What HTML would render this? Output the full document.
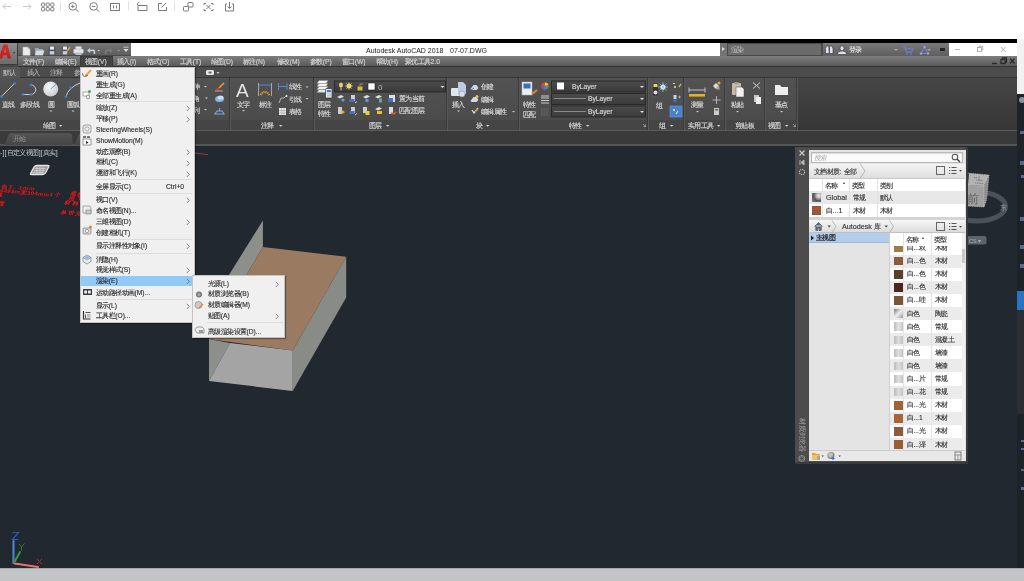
<!DOCTYPE html>
<html><head><meta charset="utf-8">
<style>
*{margin:0;padding:0;box-sizing:border-box}
html,body{width:1024px;height:581px;overflow:hidden;background:#fff;font-family:"Liberation Sans",sans-serif;}
.t,.mi,svg{will-change:transform}
.a{position:absolute}
.t{position:absolute;white-space:nowrap;font-size:6.7px;line-height:8px}
.w{color:#d8d8d8;-webkit-text-stroke:0.15px #d8d8d8}
.mi{position:absolute;white-space:nowrap;font-size:6.7px;line-height:8px;color:#222;-webkit-text-stroke:0.1px #222}
.sep{position:absolute;height:1px;background:#dcdcdc}
.dn{position:absolute;width:0;height:0;border-left:2px solid transparent;border-right:2px solid transparent;border-top:2px solid #ddd}
.c{letter-spacing:-0.6px}
.vsep{position:absolute;top:78px;width:1px;height:52px;background:#3a3a3a;box-shadow:1px 0 0 #585858}
</style></head><body>
<!-- ===== browser toolbar ===== -->
<svg class="a" style="left:0;top:0" width="240" height="14" fill="none" stroke-width="1">
<g stroke="#c8c8c8"><path d="M3 6.5h8M6 3.5l-3 3 3 3"/><path d="M23 6.5h8M28 3.5l3 3-3 3"/></g>
<g stroke="#7a7a7a">
<rect x="41.5" y="3.0" width="3.2" height="3.2" rx="0.7"/><rect x="46.1" y="3.0" width="3.2" height="3.2" rx="0.7"/><rect x="50.7" y="3.0" width="3.2" height="3.2" rx="0.7"/><rect x="41.5" y="7.6" width="3.2" height="3.2" rx="0.7"/><rect x="46.1" y="7.6" width="3.2" height="3.2" rx="0.7"/><rect x="50.7" y="7.6" width="3.2" height="3.2" rx="0.7"/>
<circle cx="72.8" cy="6.4" r="3.8"/><path d="M75.6 9.2l3 2.6M71 6.4h3.6M72.8 4.6v3.6"/>
<circle cx="93.6" cy="6.4" r="3.8"/><path d="M96.4 9.2l3 2.6M91.8 6.4h3.6"/>
<rect x="110.5" y="3.5" width="9" height="7"/><path d="M113.5 5.5v3M116.5 5.5v3"/>
<path d="M138 5.5h9v5h-9zM137.5 5v-1.5l1.8-1.5"/>
<path d="M162 3.5h-3.5v7h8v-3.5M161.5 7.5l4.5-4.5"/>
<rect x="183.5" y="6.5" width="5" height="4.5" rx="0.8"/><rect x="188" y="2.5" width="5" height="4.5" rx="0.8"/>
<path d="M204 5v-1.5h2M211 3.5h2V5M213 9v1.5h-2M206 10.5h-2V9M206.5 5l4 4M210.5 5l-4 4"/>
<path d="M227 4h-1.5v7h8V4H232M229.5 2v6M227.5 6.5l2 2 2-2"/>
</g>
<g stroke="#e0e0e0"><path d="M60.5 1.5v9M128.5 1.5v9M174.5 1.5v9"/></g>
</svg>

<!-- ===== black bar & app frame ===== -->
<div class="a" style="left:0;top:39px;width:1017px;height:4px;background:#000"></div>
<div class="a" style="left:1017px;top:39px;width:7px;height:55px;background:#f2f2f2"></div>
<div class="a" style="left:1017px;top:94px;width:7px;height:474px;background:#1e232a"></div>

<!-- title bar -->
<div class="a" style="left:0;top:43px;width:1017px;height:13px;background:#fff"></div>
<div class="a" style="left:18px;top:43px;width:113px;height:13px;background:linear-gradient(#747474,#5e5e5e);border-bottom:1px solid #4a4a4a"></div>
<div class="t" style="left:366px;top:45.5px;font-size:7px;line-height:9px;color:#1a1a1a">Autodesk AutoCAD 2018</div><div class="t" style="left:449.5px;top:45.5px;font-size:7px;line-height:9px;color:#1a1a1a">07-07.DWG</div>
<div class="a" style="left:720px;top:43px;width:7px;height:13px;background:#747474"></div>
<div class="a" style="left:722px;top:47px;width:0;height:0;border-top:2.5px solid transparent;border-bottom:2.5px solid transparent;border-left:3px solid #ddd"></div>
<div class="a" style="left:727px;top:43px;width:95px;height:13px;background:#6b6b6b;border:1px solid #4a4a4a"></div>
<div class="t" style="left:731px;top:46px;color:#c8c8c8"><span class="c">渲染</span></div>
<div class="a" style="left:822px;top:43px;width:127px;height:13px;background:linear-gradient(#7a7a7a,#5e5e5e);border-left:1px solid #4a4a4a"></div>
<div class="t" style="left:849px;top:46px;color:#e0e0e0;-webkit-text-stroke:0.15px #e0e0e0"><span class="c">登录</span></div>
<div class="dn" style="left:894px;top:49px;border-top-color:#aaa"></div>
<div class="dn" style="left:927px;top:49px;border-top-color:#aaa"></div>
<div class="a" style="left:940px;top:48px;width:5px;height:3px;background:#222"></div>
<div class="a" style="left:949px;top:43px;width:68px;height:13px;background:#fff"></div>
<svg class="a" style="left:820px;top:43px" width="200" height="14" fill="none" stroke-width="1">
<g fill="#dfe4ec" stroke="#333" stroke-width="0.6"><path d="M5.5 10.5v-5l1-2.5h2l0.5 2.5v5z"/><path d="M9.5 10.5v-5l0.5-2.5h2l1 2.5v5z"/></g><path d="M8.8 6h1" stroke="#333" stroke-width="1"/>
<g fill="#dde2ea" stroke="#333" stroke-width="0.6"><ellipse cx="22" cy="5.3" rx="2" ry="2.6"/><path d="M17.5 11.5c0-2.6 1.6-3.4 4.5-3.4s4.5 0.8 4.5 3.4z"/></g>
<path d="M83 4h1.8l1.5 5h5.4l1-3.5h-7" stroke="#6a7ac0" stroke-width="1.3"/><circle cx="87" cy="11" r="0.9" fill="#6a7ac0"/><circle cx="91" cy="11" r="0.9" fill="#6a7ac0"/>
<path d="M101 10.5l3.5-6.5 3.5 6.5z" stroke="#7a86c8" stroke-width="1"/><g fill="#a8b4e8" stroke="#6a76b8" stroke-width="0.5"><circle cx="104.5" cy="4" r="1.2"/><circle cx="101" cy="10.5" r="1.2"/><circle cx="108" cy="10.5" r="1.2"/></g>
<g stroke="#a0a0a0" stroke-width="0.8"><path d="M135 6.5h5"/><rect x="157.5" y="4.5" width="4" height="4"/><path d="M159 4.5v-1.3h3.8v3.8h-1.3"/><path d="M181 4l4.5 5M185.5 4l-4.5 5"/></g>
</svg>

<!-- logo -->
<div class="a" style="left:0;top:43px;width:18px;height:22px;background:linear-gradient(#8e8e8e,#6c6c6c);border-right:1px solid #3c3c3c;border-bottom:1px solid #3c3c3c"></div>
<div class="a" style="left:0;top:65px;width:18px;height:2px;background:#474747"></div>
<svg class="a" style="left:0;top:43px" width="18" height="22"><defs><linearGradient id="lg" x1="0" y1="0" x2="0" y2="1"><stop offset="0" stop-color="#e02a2a"/><stop offset="1" stop-color="#c01c1c"/></linearGradient></defs>
<path fill-rule="evenodd" d="M-1.5 15.5 L3.6 1.5 H7.4 L11 15.5 H7.6 L6.9 12.3 H3.2 L2.2 15.5 Z M3.9 9.6 H6.3 L5.3 5 Z" fill="url(#lg)"/><path d="M12.8 9.2h2.6l-1.3 1.5z" fill="#333"/></svg>
<!-- QAT icons -->
<svg class="a" style="left:17px;top:43px" width="114" height="13">
<path d="M5.8 4h4.8l2.6 2.4v6.1H5.8z" fill="#ececec" stroke="#9a9a9a" stroke-width="0.4"/><path d="M10.6 4v2.4h2.6" fill="#c8c8c8"/>
<path d="M18 5h3.2l1 1h3.8v6.2H18z" fill="#9aa8b8"/><path d="M19.5 7.6h8l-1.6 4.6H18z" fill="#d4dce6"/>
<rect x="31.5" y="3.6" width="7" height="8.4" rx="1" fill="#4c5a6a"/><rect x="33" y="3.6" width="4" height="3" fill="#eaeaea"/><rect x="32.8" y="8.2" width="4.4" height="3.2" fill="#c8d0d8"/>
<rect x="44.5" y="3.6" width="7" height="8.4" rx="1" fill="#4c5a6a"/><rect x="46" y="3.6" width="4" height="3" fill="#eaeaea"/><rect x="45.8" y="8.2" width="4.4" height="3.2" fill="#c8d0d8"/><path d="M49.5 7.5l3-3.8 1.2 1-3 3.8z" fill="#f0a030"/>
<rect x="58.5" y="3.5" width="6" height="2.5" fill="#e8e8e8"/><rect x="56.5" y="6" width="10" height="4.5" rx="1.2" fill="#e4e4e4" stroke="#999" stroke-width="0.4"/><rect x="58.5" y="9.5" width="6" height="2.5" fill="#a8c4e4"/>
<path d="M70 7.5l3-2.6v1.6h3.6q1.6 0 1.6 1.8v2.6h-1.6V8.2H73v1.8z" fill="#c4ccd6"/>
<path d="M80.5 7h2.4l-1.2 1.4z" fill="#ccc"/>
<path d="M96 7.5l-3-2.6v1.6h-3.6q-1.6 0-1.6 1.8v2.6h1.6V8.2H93v1.8z" fill="#7a7a7a"/>
<path d="M100.5 7h2.4l-1.2 1.4z" fill="#aaa"/>
<path d="M106.5 4.2h5" stroke="#ddd" stroke-width="0.8"/><path d="M106.5 6l2.5 3 2.5-3z" fill="#ddd"/>
</svg>

<!-- menu bar -->
<div class="a" style="left:18px;top:56px;width:999px;height:11px;background:linear-gradient(#7e7e7e,#5a5a5a);border-bottom:1px solid #333"></div>
<div class="a" style="left:80px;top:56px;width:33px;height:11px;background:#444;border:1px solid #3a3a3a"></div>
<div class="t w" style="left:23px;top:57.5px;color:#cfcfcf"><span class="c">文件</span>(F)</div>
<div class="t w" style="left:55px;top:57.5px;color:#cfcfcf"><span class="c">编辑</span>(E)</div>
<div class="t w" style="left:85px;top:57.5px;color:#cfcfcf"><span class="c">视图</span>(V)</div>
<div class="t w" style="left:117px;top:57.5px;color:#cfcfcf"><span class="c">插入</span>(I)</div>
<div class="t w" style="left:147px;top:57.5px;color:#cfcfcf"><span class="c">格式</span>(O)</div>
<div class="t w" style="left:180px;top:57.5px;color:#cfcfcf"><span class="c">工具</span>(T)</div>
<div class="t w" style="left:211px;top:57.5px;color:#cfcfcf"><span class="c">绘图</span>(D)</div>
<div class="t w" style="left:243px;top:57.5px;color:#cfcfcf"><span class="c">标注</span>(N)</div>
<div class="t w" style="left:277px;top:57.5px;color:#cfcfcf"><span class="c">修改</span>(M)</div>
<div class="t w" style="left:310px;top:57.5px;color:#cfcfcf"><span class="c">参数</span>(P)</div>
<div class="t w" style="left:342px;top:57.5px;color:#cfcfcf"><span class="c">窗口</span>(W)</div>
<div class="t w" style="left:376px;top:57.5px;color:#cfcfcf"><span class="c">帮助</span>(H)</div>
<div class="t w" style="left:405px;top:57.5px;color:#cfcfcf"><span class="c">聚优工具</span>2.0</div>
<svg class="a" style="left:985px;top:56px" width="32" height="11" fill="none" stroke="#2a2a2a" stroke-width="1.3">
<path d="M7 7.5h5"/><rect x="16" y="3.5" width="4" height="4"/><path d="M17.5 3.5v-1.5h4v4h-1.5"/><path d="M25 2.5l4.5 5M29.5 2.5l-4.5 5"/>
</svg>

<!-- ribbon tabs -->
<div class="a" style="left:0;top:67px;width:1017px;height:11px;background:#4c4c4c;border-bottom:1px solid #363636"></div>
<div class="a" style="left:0;top:67px;width:20px;height:11px;background:#565656"></div>
<div class="t" style="left:3px;top:68.5px;color:#d0d0d0"><span class="c">默认</span></div>
<div class="t" style="left:27px;top:68.5px;color:#c0c0c0"><span class="c">插入</span></div>
<div class="t" style="left:50px;top:68.5px;color:#c0c0c0"><span class="c">注释</span></div>
<div class="t" style="left:74px;top:68.5px;color:#c0c0c0"><span class="c">参</span></div>
<svg class="a" style="left:205px;top:68px" width="16" height="9"><rect x="1" y="2" width="8" height="5" rx="1.5" fill="#e8e8e8"/><rect x="3.5" y="3.5" width="3" height="2" fill="#666"/><path d="M11.5 4h3l-1.5 2z" fill="#ccc"/></svg>

<!-- ribbon body -->
<div class="a" style="left:0;top:78px;width:797px;height:52px;background:linear-gradient(#525252,#4a4a4a)"></div>
<div class="a" style="left:0;top:119.5px;width:797px;height:10.5px;background:#454545"></div>
<div class="a" style="left:797px;top:78px;width:220px;height:52px;background:linear-gradient(#464646,#363636)"></div>
<div class="a" style="left:0;top:130px;width:1017px;height:1px;background:#5c5c5c"></div>

<!-- file tabs -->
<div class="a" style="left:0;top:131px;width:1017px;height:13px;background:#3a3a3a"></div>
<div class="a" style="left:0;top:144px;width:1017px;height:2px;background:#555"></div>
<svg class="a" style="left:0;top:131px" width="100" height="14"><defs><linearGradient id="tg" x1="0" y1="0" x2="0" y2="1"><stop offset="0" stop-color="#545454"/><stop offset="1" stop-color="#464646"/></linearGradient></defs><path d="M3 14C7 14 6.5 2 11 2H69Q72.5 2 72.5 5.5V14Z" fill="url(#tg)"/><path d="M73 14C77 14 76.5 2 81 2H100V14Z" fill="url(#tg)"/></svg>
<div class="t" style="left:13px;top:135px;color:#9a9a9a"><span class="c">开始</span></div>


<!-- drawing area -->
<div class="a" style="left:0;top:146px;width:1017px;height:422px;background:#212830"></div>
<div class="a" style="left:0;top:568px;width:1024px;height:13px;background:#c3c4c6;box-shadow:inset 0 1px 0 #a8a9ab"></div>

<!-- panel separators -->
<div class="vsep" style="left:229px"></div>
<div class="vsep" style="left:313px"></div>
<div class="vsep" style="left:446px"></div>
<div class="vsep" style="left:518px"></div>
<div class="vsep" style="left:647px"></div>
<div class="vsep" style="left:683px"></div>
<div class="vsep" style="left:724px"></div>
<div class="vsep" style="left:764px"></div>
<div class="vsep" style="left:796px"></div>
<svg class="a" style="left:0;top:78px" width="800" height="52">
<!-- draw panel -->
<path d="M1.5 18.6L14.5 5.3M23 16.5H31M31 7a4.75 4.75 0 0 1 0 9.5M66 18.6Q68 10 80 5" stroke="#cfcfcf" stroke-width="1" fill="none"/>
<g fill="#4a78c8"><circle cx="1.5" cy="18.6" r="1.4"/><circle cx="14.5" cy="5.3" r="1.4"/><circle cx="23" cy="16.5" r="1.4"/><circle cx="31" cy="16.5" r="1.4"/><circle cx="31" cy="7" r="1.4"/><circle cx="66" cy="18.6" r="1.4"/><circle cx="70.5" cy="9.6" r="1.4"/></g>
<defs><radialGradient id="cg" cx="0.4" cy="0.35" r="0.7"><stop offset="0" stop-color="#fafafa"/><stop offset="1" stop-color="#c8c8d0"/></radialGradient></defs>
<circle cx="50.7" cy="11" r="7.5" fill="url(#cg)"/><path d="M50.7 11L56 6.5" stroke="#5aa0e8" stroke-width="1"/>
<!-- hidden modify panel icons -->
<path d="M224 5l-5 5" stroke="#e8a040" stroke-width="1.6"/><circle cx="218" cy="11" r="1.8" fill="#c84020"/><path d="M215 13h8" stroke="#aaa"/>
<ellipse cx="219.5" cy="21" rx="4.5" ry="3" fill="#8ab4e8"/><ellipse cx="220.5" cy="19.5" rx="3" ry="2" fill="#c8dcf4"/>
<path d="M215 36h9l-2-3h-5z" fill="none" stroke="#7aa6e0" stroke-width="1.2"/><path d="M219.5 30v3" stroke="#7aa6e0" stroke-width="1.2"/>
<g fill="#ccc"><path d="M204 8h3l-1.5 1.6z"/><path d="M205 19.5h3l-1.5 1.6z"/><path d="M204 31h3l-1.5 1.6z"/></g>
<!-- annotation -->
<text x="236" y="19" font-size="19" fill="#e6e6e6" font-family="Liberation Sans">A</text>
<path d="M258.5 5v13M271.5 5v13" stroke="#bbb" stroke-width="0.8"/><path d="M259 7h12" stroke="#4a8ae0" stroke-width="1"/>
<path d="M260.5 17q4-6 9 0" stroke="#e8a020" stroke-width="2" fill="none" stroke-dasharray="1.2 0.8"/>
<path d="M278.5 5v7M287 5v7M279 8.5h8" stroke="#4a8ae0" stroke-width="1" fill="none"/>
<path d="M279 25l2-5h3l2-2" stroke="#ccc" stroke-width="0.8" fill="none"/><circle cx="286.5" cy="18" r="1" fill="#eee"/>
<rect x="279" y="30" width="7" height="7" fill="#e8e8e8"/><path d="M279 32.5h7M279 35h7M281.5 30v7M284 30v7" stroke="#999" stroke-width="0.5"/>
<g fill="#ccc"><path d="M305.5 8.5h3l-1.5 1.6z"/><path d="M305.5 20h3l-1.5 1.6z"/><path d="M242 32h3l-1.5 1.6z"/></g>
<g fill="#ccc"><path d="M49.5 32.5h3l-1.5 1.6z"/><path d="M71.5 32.5h3l-1.5 1.6z"/></g>
<!-- layer panel -->
<g stroke="#888" stroke-width="0.5"><path d="M317 11.5l2-3h9l-2 3z" fill="#f2f2f2"/><path d="M317 8.5l2-3h9l-2 3z" fill="#f6f6f6"/><path d="M317 5.5l2-3h9l-2 3z" fill="#fafafa"/><path d="M317 14.5l2-3h9l-2 3z" fill="#e8e8e8"/></g>
<rect x="325.5" y="10.5" width="6.5" height="9.5" rx="0.8" fill="#e6ecf2" stroke="#333" stroke-width="0.7"/><rect x="326.8" y="12" width="4" height="2.2" fill="#3a78d0"/><path d="M327 16h4M327 17.8h4" stroke="#888" stroke-width="0.5"/>
<rect x="334.5" y="3" width="111" height="11" fill="url(#dd)" stroke="#2a2a2a"/>
<ellipse cx="341" cy="7" rx="2" ry="2.5" fill="#f0d060"/><path d="M341 9.5v3" stroke="#ccc"/>
<circle cx="349" cy="8" r="2.5" fill="#f0e080"/><path d="M345 8h8M349 4v8M346.2 5.2l5.6 5.6M351.8 5.2l-5.6 5.6" stroke="#e8d060" stroke-width="0.6"/>
<rect x="357.5" y="8.5" width="5" height="4" fill="#e0b830"/><path d="M360 8.5v-2.5h3" stroke="#aaa" fill="none" stroke-width="0.7"/>
<rect x="368" y="5" width="7" height="7" fill="#fff" stroke="#222" stroke-width="0.6"/>
<text x="378" y="12" font-size="8" fill="#bbb" font-family="Liberation Sans">0</text>
<path d="M440.5 8h4l-2 2z" fill="#ddd"/>
<g>
<path d="M337 19l4-2 3 1.5-4 2z" fill="#ddd"/><circle cx="343" cy="22" r="1.6" fill="#5aa0e8"/>
<rect x="351" y="17" width="4" height="6" fill="#ccd"/><rect x="349.5" y="21" width="5" height="3" fill="#4a70c0"/><path d="M355 25l2-1.5" stroke="#ccc"/>
<path d="M363 19l4-2 3 1.5-4 2z" fill="#ddd"/><circle cx="367" cy="22.5" r="1.8" fill="#5a9ae0"/>
<path d="M375 19l4-2 3 1.5-4 2z" fill="#ddd"/><rect x="379" y="20.5" width="3" height="4" fill="#6aa" />
<rect x="389" y="17" width="6" height="7" fill="#dde" /><rect x="388" y="20" width="5" height="4" fill="#4a70c0"/>
<rect x="338" y="29" width="4" height="7" fill="#ccc"/><circle cx="343" cy="34" r="1.6" fill="#f0a030"/>
<rect x="351" y="29" width="4" height="6" fill="#ccd"/><rect x="349.5" y="33" width="5" height="3" fill="#4a70c0"/><path d="M355 37l2-1.5" stroke="#ccc"/>
<rect x="363" y="29" width="4" height="6" fill="#ccc"/><rect x="365.5" y="33" width="4" height="4" fill="#f0d020"/>
<path d="M375 31l4-2 3 1.5-4 2z" fill="#ddd"/><rect x="377" y="33" width="5" height="3" fill="#e8c020"/>
<rect x="389" y="29" width="4" height="7" fill="#ddd"/><path d="M391 35l3 1 2-2" stroke="#e86020" stroke-width="1.4" fill="none"/>
</g>
<!-- block -->
<rect x="451" y="10" width="11" height="8" rx="1" fill="#dfe6ee"/><path d="M458 4h5l3 3v9h-8z" fill="#b8cce8"/><circle cx="462" cy="16" r="3" fill="#d8dde4" stroke="#888" stroke-width="0.5"/>
<path d="M470.5 11l3-4h3l2 3-2 2h-5z" fill="#d0d8e4"/><path d="M471 12l3-2" stroke="#4a78c8"/>
<path d="M470.5 23l3-4h3l2 3-2 2h-5z" fill="#d0d8e4"/><circle cx="477" cy="18.5" r="1.5" fill="#f0c040"/>
<path d="M472 32l2 3 4-5" stroke="#ddd" stroke-width="1.3" fill="none"/><path d="M475 34l3-3" stroke="#e88030" stroke-width="1.3"/>
<g fill="#ccc"><path d="M457 32.5h3l-1.5 1.6z"/><path d="M512 33h3l-1.5 1.6z"/></g>
<!-- properties -->
<rect x="522" y="4" width="10" height="13" fill="#e8eef4" stroke="#bbb" stroke-width="0.5"/><rect x="523.5" y="5.5" width="7" height="5" fill="#3a70b0"/><path d="M532 16l5-4" stroke="#d88830" stroke-width="2.2"/>
<circle cx="545" cy="8" r="3.6" fill="#e04848"/><path d="M545 8V4.4a3.6 3.6 0 0 1 3.4 2.4z" fill="#f0d040"/><path d="M545 8l3.4-1.2a3.6 3.6 0 0 1-1 3.8z" fill="#40b040"/><path d="M545 8l2.4 2.6a3.6 3.6 0 0 1-4.4 0.4z" fill="#4080e0"/><path d="M545 8L543 11a3.6 3.6 0 0 1-1.6-3.6z" fill="#a040c0"/>
<path d="M541 18h8M541 20h8M541 22.5h8M541 25h8" stroke="#ddd" stroke-width="0.9"/>
<path d="M541 31h8M541 33h8M541 35h8M541 37h8" stroke="#888" stroke-width="0.6" stroke-dasharray="1 0.6"/>
<defs><linearGradient id="dd" x1="0" y1="0" x2="0" y2="1"><stop offset="0" stop-color="#4c4c4c"/><stop offset="1" stop-color="#3a3a3a"/></linearGradient></defs><rect x="551.5" y="3" width="94" height="11" fill="url(#dd)" stroke="#2a2a2a"/>
<rect x="551.5" y="15.5" width="94" height="11" fill="url(#dd)" stroke="#2a2a2a"/>
<rect x="551.5" y="28" width="94" height="11" fill="url(#dd)" stroke="#2a2a2a"/>
<rect x="557" y="4.5" width="7" height="7" fill="#fff"/>
<path d="M554 20.5h32M554 33.5h32" stroke="#bbb" stroke-width="0.6"/>
<g fill="#ddd"><path d="M640 8h4l-2 2z"/><path d="M640 20h4l-2 2z"/><path d="M640 33h4l-2 2z"/></g>
<!-- group -->
<rect x="652.5" y="5" width="6" height="13" fill="#333" stroke="#666" stroke-width="0.5"/><rect x="653.5" y="6" width="4" height="3" fill="#e8d860"/><circle cx="655.5" cy="14.5" r="2" fill="#ddd"/>
<circle cx="663" cy="9" r="2.6" fill="#fff"/><path d="M658 9h10M663 4v10M659.5 5.5l7 7M666.5 5.5l-7 7" stroke="#8ac8f0" stroke-width="0.7"/>
<path d="M673 5.5h2M679 9l2-3" stroke="#e8d060" stroke-width="1.2"/><circle cx="675" cy="9" r="1" fill="#ddd"/>
<rect x="673.5" y="17" width="3" height="4" fill="#ccd"/><rect x="673.5" y="21.5" width="3" height="3" fill="#3a70c0"/><path d="M678 19h3M679.5 17.5v3" stroke="#ccc" stroke-width="0.6"/>
<rect x="670" y="28" width="12" height="11" fill="#4a80d0" stroke="#6a9ae8" stroke-width="0.6"/><circle cx="674" cy="32" r="1" fill="#eee"/><path d="M676 36l2-3" stroke="#f0e060" stroke-width="1.2"/>
<!-- utilities -->
<path d="M689 12h16M689 9.5v5M705 9.5v5" stroke="#ddd" stroke-width="0.8"/><rect x="689" y="16" width="16" height="2.6" fill="#e8b020"/>
<g fill="#ccc"><path d="M696 33h3l-1.5 1.6z"/></g>
<path d="M713 8l3-3 3 3-3 3z" fill="#ddd"/><circle cx="719" cy="5" r="1.5" fill="#f0a030"/><rect x="716.5" y="8.5" width="3" height="3" fill="#aaa"/>
<path d="M712.5 22h8M716.5 18v8" stroke="#ccc" stroke-width="0.8"/>
<rect x="714" y="30" width="5" height="7" fill="#ccc"/><rect x="714.8" y="31" width="3.4" height="1.5" fill="#666"/>
<!-- clipboard -->
<rect x="732" y="5" width="9" height="12" rx="1" fill="#c6bba8"/><rect x="734.5" y="4" width="4" height="2" fill="#999"/><path d="M736 9h6l2 2v8h-8z" fill="#f0f0f0" stroke="#444" stroke-width="0.5"/>
<path d="M753 4.5l7 6M760 4.5l-7 6" stroke="#ddd" stroke-width="0.9"/>
<rect x="754" y="17" width="5" height="7" fill="#c8c8c8"/><rect x="756" y="19" width="5" height="7" fill="#eee"/>
<g fill="#ccc"><path d="M736 33h3l-1.5 1.6z"/><path d="M780 33h3l-1.5 1.6z"/></g>
<!-- view/base point -->
<path d="M775 7h5l1.5 2h6.5v8h-13z" fill="#eee"/>
<!-- panel title arrows -->
<g fill="#ddd"><path d="M59 47h3.4l-1.7 1.8z"/><path d="M279 47h3.4l-1.7 1.8z"/><path d="M386 47h3.4l-1.7 1.8z"/><path d="M486 47h3.4l-1.7 1.8z"/><path d="M586 47h3.4l-1.7 1.8z"/><path d="M670 47h3.4l-1.7 1.8z"/><path d="M717 47h3.4l-1.7 1.8z"/><path d="M785 47h3.4l-1.7 1.8z"/></g>
<path d="M643 46l2.5 2.5M645.5 46.5v2h-2" stroke="#bbb" stroke-width="0.6" fill="none"/>
<path d="M793 46l2.5 2.5M795.5 46.5v2h-2" stroke="#bbb" stroke-width="0.6" fill="none"/>
</svg>
<div class="t w" style="left:193px;top:83px"><span class="c">伸</span></div>
<div class="t w" style="left:193px;top:95px"><span class="c">角</span></div>
<div class="t w" style="left:193px;top:107px"><span class="c">列</span></div>
<div class="t w" style="left:2px;top:100.5px"><span class="c">直线</span></div>
<div class="t w" style="left:20px;top:100.5px"><span class="c">多段线</span></div>
<div class="t w" style="left:47.5px;top:100.5px"><span class="c">圆</span></div>
<div class="t w" style="left:67px;top:100.5px"><span class="c">圆弧</span></div>
<div class="t w" style="left:43px;top:121.5px"><span class="c">绘图</span></div>
<div class="t w" style="left:236.5px;top:100.5px"><span class="c">文字</span></div>
<div class="t w" style="left:258.5px;top:100.5px"><span class="c">标注</span></div>
<div class="t w" style="left:289px;top:83px"><span class="c">线性</span></div>
<div class="t w" style="left:289px;top:95.5px"><span class="c">引线</span></div>
<div class="t w" style="left:289px;top:108px"><span class="c">表格</span></div>
<div class="t w" style="left:261px;top:121.5px"><span class="c">注释</span></div>
<div class="t w" style="left:318px;top:100.5px"><span class="c">图层</span></div>
<div class="t w" style="left:318px;top:109.5px"><span class="c">特性</span></div>
<div class="t w" style="left:399px;top:95px"><span class="c">置为当前</span></div>
<div class="t w" style="left:399px;top:107px"><span class="c">匹配图层</span></div>
<div class="t w" style="left:369px;top:121.5px"><span class="c">图层</span></div>
<div class="t w" style="left:452px;top:101px"><span class="c">插入</span></div>
<div class="t w" style="left:481px;top:83px"><span class="c">创建</span></div>
<div class="t w" style="left:481px;top:95.5px"><span class="c">编辑</span></div>
<div class="t w" style="left:481px;top:108px"><span class="c">编辑属性</span></div>
<div class="t w" style="left:476px;top:121.5px"><span class="c">块</span></div>
<div class="t w" style="left:523px;top:101px"><span class="c">特性</span></div>
<div class="t w" style="left:523px;top:110.5px"><span class="c">匹配</span></div>
<div class="t w" style="left:572px;top:82.5px">ByLayer</div>
<div class="t w" style="left:588px;top:94.5px">ByLayer</div>
<div class="t w" style="left:588px;top:107.5px">ByLayer</div>
<div class="t w" style="left:569px;top:121.5px"><span class="c">特性</span></div>
<div class="t w" style="left:656px;top:102px"><span class="c">组</span></div>
<div class="t w" style="left:659px;top:121.5px"><span class="c">组</span></div>
<div class="t w" style="left:691px;top:101px"><span class="c">测量</span></div>
<div class="t w" style="left:688px;top:121.5px"><span class="c">实用工具</span></div>
<div class="t w" style="left:731px;top:101px"><span class="c">粘贴</span></div>
<div class="t w" style="left:735px;top:121.5px"><span class="c">剪贴板</span></div>
<div class="t w" style="left:775px;top:101px"><span class="c">基点</span></div>
<div class="t w" style="left:768px;top:121.5px"><span class="c">视图</span></div>
<div class="t" style="left:0;top:148.5px;color:#c8c8c8;font-size:7px;letter-spacing:0.15px">-][<span class="c">自定义视图</span>][<span class="c">真实</span>]</div>
<svg class="a" style="left:0;top:146px" width="1017" height="422">
<!-- white object -->
<path transform="translate(-3,2)" d="M33.5 25.5l3.5-6.5q1-1.5 3-1.5h11q1.5 0 0.8 1.3l-3.3 6.2q-1 1.5-3 1.5h-11q-1.6 0-1-1z" fill="#9a9a9a" stroke="#e6e6e6" stroke-width="1.3"/>
<path transform="translate(-3,2)" d="M37.5 20.5h11M36.5 22.5h11M35.5 24.5h11M40 19v7M43 19v7M46 19v7" stroke="#eee" stroke-width="0.5"/>
<!-- red text -->
<g fill="#f41414" font-family="Liberation Sans" font-style="italic" font-weight="bold">
<text transform="translate(-6,41) rotate(5) scale(1.0,0.85)" font-size="6" letter-spacing="1.0">白色1. 1mm</text>
<text transform="translate(-7,45.5) rotate(5) scale(1.0,0.85)" font-size="6" letter-spacing="0.35">厚4493m宽304mm</text>
<text transform="translate(49.5,50) rotate(5) scale(1.0,0.85)" font-size="6" letter-spacing="1.5">1个</text>
<text transform="translate(-4,50) rotate(5) scale(1.0,0.85)" font-size="6" letter-spacing="0.5">线</text>
<text transform="translate(-2,58.5) rotate(5) scale(1.0,0.85)" font-size="6" letter-spacing="0.5">度</text>
<text transform="translate(69.5,49) rotate(5) scale(1.0,0.85)" font-size="6" letter-spacing="1.0">规格</text>
<text transform="translate(68,53.5) rotate(5) scale(1.0,0.85)" font-size="6" letter-spacing="0.8">用 T</text>
<text transform="translate(64,58) rotate(5) scale(1.0,0.85)" font-size="6" letter-spacing="1.2">材料</text>
<text transform="translate(60,67.5) rotate(5) scale(1.0,0.85)" font-size="6" letter-spacing="1.2">单价元</text>
</g>
<path d="M195 7l13 1.6" stroke="#c04040" stroke-width="0.8"/>
<!-- box -->
<polygon points="262.9,74.4 262.9,101 209,193 230,197 209,235 209,161" fill="#8d8f8b"/>
<polygon points="262.9,101 346.2,110.8 292.7,204.5 209,193" fill="#9a7b61"/>
<polygon points="346.2,110.8 346.2,151.5 292.7,245 292.7,204.5" fill="#898b87"/>
<polygon points="230,197 292.7,204.5 292.7,245 209,235" fill="#a4a4a4"/>
<!-- UCS -->
<path d="M13.5 395v22" stroke="#4a80d0" stroke-width="2.2" stroke-linecap="round"/>
<path d="M15 415l5-9" stroke="#3a9a3a" stroke-width="2"  stroke-linecap="round"/>
<path d="M14.5 417.5l23.5 3.5" stroke="#e87070" stroke-width="2" stroke-linecap="round"/>
<path d="M12.5 386.5h6l-6 7h6" stroke="#2a5ab0" stroke-width="1.2" fill="none"/>
<path d="M19 398l2.5 3 3-3.5M21.5 401v3.5" stroke="#2a8a2a" stroke-width="0.9" fill="none"/>
<path d="M37 413l5 5M42 413l-5 5" stroke="#b83030" stroke-width="0.9"/>
<!-- viewcube -->
<ellipse cx="977" cy="60.5" rx="28.5" ry="14.5" fill="none" stroke="#4a515a" stroke-width="5"/>
<path d="M968 39l16 1 5-11-20-1.8z" fill="#b2b2b2"/>
<path d="M968 39l16 1v21l-16-1z" fill="#a0a0a0"/>
<path d="M984 40l5-11-2.5 25-2.5 7z" fill="#8c8c8c"/>
<path d="M968 27.2l21 1.8-2.5 25-2.5 7-16-1M984 40l5-11M968 39l16 1v21" fill="none" stroke="#d0d0d0" stroke-width="0.6" stroke-dasharray="1.4 0.9"/>
<text x="967" y="57" font-size="12" fill="#5e5e5e">前</text>
<path d="M974 31.5l3 0.3M979 30.5v5M976 34l7 0.5M975 37l8 0.6" stroke="#6a6a6a" stroke-width="0.8" stroke-dasharray="1.4 0.8"/>
<text x="999.5" y="64" font-size="7" fill="#9aa0a8">东</text>
<rect x="960" y="90" width="26.5" height="8.5" rx="2.5" fill="#5c636b"/>
<text x="969" y="96.5" font-size="5.5" fill="#aab0b8" font-family="Liberation Sans">CS ▾</text>
</svg>
<div class="a" style="left:1017px;top:291px;width:7px;height:19px;background:#2a72c4"></div><div class="a" style="left:1017px;top:310px;width:7px;height:104px;background:#2b2e33"></div>
<svg class="a" style="left:0;top:146px;overflow:visible" width="1024" height="422"><!-- right strip icons -->
<g fill="#8a94a0"><circle cx="1022" cy="-46" r="3"/></g>
<g fill="#56698a"><rect x="1020" y="-15" width="4" height="3"/><rect x="1020" y="15" width="4" height="4"/><rect x="1021" y="29" width="3" height="3"/><rect x="1020" y="71" width="4" height="4"/><rect x="1020" y="99" width="4" height="4"/><rect x="1020" y="118" width="4" height="4"/>
<rect x="1021" y="294" width="3" height="2"/><rect x="1021" y="302" width="3" height="2"/><rect x="1021" y="323" width="3" height="2"/><rect x="1021" y="341" width="3" height="3"/></g>
</svg>

<div class="a" style="left:80px;top:67px;width:115px;height:256px;background:#f0f0f0;border:1px solid #c4c4c4;box-shadow:1px 1px 1px rgba(0,0,0,.35)"></div>
<div class="a" style="left:81px;top:276px;width:113px;height:10px;background:#91c9f7"></div>
<div class="sep" style="left:96px;top:101px;width:96px"></div>
<div class="sep" style="left:96px;top:179px;width:96px"></div>
<div class="sep" style="left:96px;top:193px;width:96px"></div>
<div class="sep" style="left:96px;top:239px;width:96px"></div>
<div class="sep" style="left:96px;top:252.5px;width:96px"></div>
<div class="sep" style="left:96px;top:299px;width:96px"></div>
<div class="mi" style="left:96px;top:69.5px"><span class="c">重画</span>(R)</div>
<div class="mi" style="left:96px;top:80.5px"><span class="c">重生成</span>(G)</div>
<div class="mi" style="left:96px;top:91.5px"><span class="c">全部重生成</span>(A)</div>
<div class="mi" style="left:96px;top:104px"><span class="c">缩放</span>(Z)</div>
<div class="mi" style="left:96px;top:115px"><span class="c">平移</span>(P)</div>
<div class="mi" style="left:96px;top:126px">SteeringWheels(S)</div>
<div class="mi" style="left:96px;top:136.7px">ShowMotion(M)</div>
<div class="mi" style="left:96px;top:147.6px"><span class="c">动态观察</span>(B)</div>
<div class="mi" style="left:96px;top:158.4px"><span class="c">相机</span>(C)</div>
<div class="mi" style="left:96px;top:169.3px"><span class="c">漫游和飞行</span>(K)</div>
<div class="mi" style="left:96px;top:182.5px"><span class="c">全屏显示</span>(C)</div>
<div class="mi" style="left:166px;top:182.5px">Ctrl+0</div>
<div class="mi" style="left:96px;top:196px"><span class="c">视口</span>(V)</div>
<div class="mi" style="left:96px;top:207px"><span class="c">命名视图</span>(N)...</div>
<div class="mi" style="left:96px;top:218px"><span class="c">三维视图</span>(D)</div>
<div class="mi" style="left:96px;top:228.6px"><span class="c">创建相机</span>(T)</div>
<div class="mi" style="left:96px;top:242px"><span class="c">显示注释性对象</span>(I)</div>
<div class="mi" style="left:96px;top:255.5px"><span class="c">消隐</span>(H)</div>
<div class="mi" style="left:96px;top:266px"><span class="c">视觉样式</span>(S)</div>
<div class="mi" style="left:96px;top:277px"><span class="c">渲染</span>(E)</div>
<div class="mi" style="left:96px;top:288.6px"><span class="c">运动路径动画</span>(M)...</div>
<div class="mi" style="left:96px;top:301.5px"><span class="c">显示</span>(L)</div>
<div class="mi" style="left:96px;top:312px"><span class="c">工具栏</span>(O)...</div>
<svg class="a" style="left:186.0px;top:105.0px" width="4" height="7"><path d="M0.8 0.8L3.3 3.4 0.8 6" fill="none" stroke="#6a6a6a" stroke-width="0.8"/></svg>
<svg class="a" style="left:186.0px;top:116.0px" width="4" height="7"><path d="M0.8 0.8L3.3 3.4 0.8 6" fill="none" stroke="#6a6a6a" stroke-width="0.8"/></svg>
<svg class="a" style="left:186.0px;top:148.5px" width="4" height="7"><path d="M0.8 0.8L3.3 3.4 0.8 6" fill="none" stroke="#6a6a6a" stroke-width="0.8"/></svg>
<svg class="a" style="left:186.0px;top:159.5px" width="4" height="7"><path d="M0.8 0.8L3.3 3.4 0.8 6" fill="none" stroke="#6a6a6a" stroke-width="0.8"/></svg>
<svg class="a" style="left:186.0px;top:170.5px" width="4" height="7"><path d="M0.8 0.8L3.3 3.4 0.8 6" fill="none" stroke="#6a6a6a" stroke-width="0.8"/></svg>
<svg class="a" style="left:186.0px;top:197.0px" width="4" height="7"><path d="M0.8 0.8L3.3 3.4 0.8 6" fill="none" stroke="#6a6a6a" stroke-width="0.8"/></svg>
<svg class="a" style="left:186.0px;top:219.0px" width="4" height="7"><path d="M0.8 0.8L3.3 3.4 0.8 6" fill="none" stroke="#6a6a6a" stroke-width="0.8"/></svg>
<svg class="a" style="left:186.0px;top:243.0px" width="4" height="7"><path d="M0.8 0.8L3.3 3.4 0.8 6" fill="none" stroke="#6a6a6a" stroke-width="0.8"/></svg>
<svg class="a" style="left:186.0px;top:267.0px" width="4" height="7"><path d="M0.8 0.8L3.3 3.4 0.8 6" fill="none" stroke="#6a6a6a" stroke-width="0.8"/></svg>
<svg class="a" style="left:186.0px;top:278.0px" width="4" height="7"><path d="M0.8 0.8L3.3 3.4 0.8 6" fill="none" stroke="#6a6a6a" stroke-width="0.8"/></svg>
<svg class="a" style="left:186.0px;top:302.5px" width="4" height="7"><path d="M0.8 0.8L3.3 3.4 0.8 6" fill="none" stroke="#6a6a6a" stroke-width="0.8"/></svg>
<svg class="a" style="left:80px;top:67px" width="16" height="256">
<path d="M10.5 3.5l-4 4.5" stroke="#f0a830" stroke-width="2" stroke-linecap="round"/><path d="M6.5 8l-1 1" stroke="#c87020" stroke-width="1.6"/><path d="M2.5 6q0 3.5 2 3.5q2 0 3.5-1.5" stroke="#555" stroke-width="0.8" fill="none"/>
<rect x="3" y="25" width="6" height="4" fill="#fff" stroke="#777" stroke-width="0.6"/><circle cx="9.5" cy="24.5" r="1.5" fill="#40b040"/><circle cx="8" cy="30" r="1.8" fill="#eee" stroke="#666" stroke-width="0.6"/>
<rect x="3" y="58" width="8" height="8" rx="2" fill="none" stroke="#888" stroke-width="0.8"/><rect x="5" y="60" width="4" height="4" rx="1" fill="none" stroke="#999" stroke-width="0.7"/>
<rect x="3" y="69" width="3" height="2" fill="#777"/><rect x="7" y="69" width="3" height="2" fill="#777"/><rect x="3" y="72" width="8" height="6" fill="#fff" stroke="#555" stroke-width="0.6"/><path d="M6 74l2.5 1.5L6 77z" fill="#222"/>
<path d="M3 139h7l1 2v5H3z" fill="#eee" stroke="#777" stroke-width="0.6"/><rect x="6" y="143" width="5" height="4" fill="#ccc" stroke="#666" stroke-width="0.5"/>
<rect x="3" y="161" width="8" height="6" rx="1" fill="#ddd" stroke="#666" stroke-width="0.6"/><circle cx="7" cy="164" r="1.6" fill="#fff" stroke="#555" stroke-width="0.5"/><circle cx="10.5" cy="160" r="1.5" fill="#f08020"/>
<path d="M3 190.5l4-2.5 4 2.5v4l-4 2.5-4-2.5z" fill="#e4eef8" stroke="#777" stroke-width="0.7"/><path d="M3 190.5l4 2.5 4-2.5" fill="none" stroke="#777" stroke-width="0.6"/><path d="M3.5 190.3l3.5-2 3.5 2-3.5 2.2z" fill="#8cc0ee"/>
<rect x="3" y="222" width="9" height="6" fill="#3a3a3a"/><rect x="4.2" y="223.5" width="2.8" height="3" fill="#eee"/><rect x="8" y="223.5" width="2.8" height="3" fill="#eee"/>
<path d="M3.5 244v8h7" stroke="#333" stroke-width="1.2" fill="none"/><path d="M5.5 245.5h5M5.5 247.5v3.5" stroke="#555" stroke-width="1" fill="none"/><rect x="7" y="247" width="3.5" height="3.5" fill="#bbb"/>
</svg>
<!-- submenu -->
<div class="a" style="left:192px;top:275px;width:93px;height:63px;background:#f0f0f0;border:1px solid #c4c4c4;box-shadow:1px 1px 1px rgba(0,0,0,.35)"></div>
<div class="sep" style="left:207px;top:322px;width:76px"></div>
<div class="mi" style="left:207.5px;top:279.8px"><span class="c">光源</span>(L)</div>
<div class="mi" style="left:207.5px;top:290.4px"><span class="c">材质浏览器</span>(B)</div>
<div class="mi" style="left:207.5px;top:301px"><span class="c">材质编辑器</span>(M)</div>
<div class="mi" style="left:207.5px;top:311.8px"><span class="c">贴图</span>(A)</div>
<div class="mi" style="left:207.5px;top:327.7px"><span class="c">高级渲染设置</span>(D)...</div>
<svg class="a" style="left:275.0px;top:281.0px" width="4" height="7"><path d="M0.8 0.8L3.3 3.4 0.8 6" fill="none" stroke="#6a6a6a" stroke-width="0.8"/></svg>
<svg class="a" style="left:275.0px;top:313.0px" width="4" height="7"><path d="M0.8 0.8L3.3 3.4 0.8 6" fill="none" stroke="#6a6a6a" stroke-width="0.8"/></svg>
<svg class="a" style="left:192px;top:275px" width="16" height="63">
<circle cx="7" cy="19.5" r="3" fill="#777"/><circle cx="7" cy="19.5" r="1.5" fill="#aaa"/>
<circle cx="6.5" cy="30" r="3.5" fill="#ccc" stroke="#777" stroke-width="0.6"/><path d="M7 33l4-4" stroke="#e89020" stroke-width="1.5"/>
<path d="M3 55l2-3h5l2 2v4H5z" fill="#eee" stroke="#666" stroke-width="0.6"/><rect x="7" y="55" width="4" height="3" fill="#999"/>
</svg>
<div class="a" style="left:795px;top:146.5px;width:173px;height:317px;background:#4c4c4c;border-right:2px solid #3a3a3a;border-bottom:2px solid #3a3a3a"></div>
<div class="a" style="left:808.5px;top:150px;width:157px;height:311px;background:#e4e4e4"></div>
<svg class="a" style="left:795px;top:146px" width="14" height="320">
<path d="M4.5 4.5l5 5M9.5 4.5l-5 5" stroke="#ccc" stroke-width="1.1"/>
<path d="M5 14v5M9 14v5l-3-2.5z" stroke="#bbb" stroke-width="0.9" fill="#bbb"/>
<circle cx="7" cy="26" r="2.6" fill="none" stroke="#bbb" stroke-width="1.2" stroke-dasharray="1.2 0.8"/>
<circle cx="6.8" cy="312.5" r="3" fill="none" stroke="#9a9a9a" stroke-width="0.9"/><path d="M6.8 310.5l2 2-2 2-2-2z" fill="none" stroke="#9a9a9a" stroke-width="0.7"/>
</svg>
<div class="t" style="left:798.5px;top:418px;font-size:6.5px;line-height:7px;color:#a8a8a8;writing-mode:vertical-rl;text-orientation:sideways;letter-spacing:-0.3px">材质浏览器</div>
<!-- search -->
<div class="a" style="left:811px;top:152px;width:152px;height:11px;background:#fafafa;border:1px solid #b8b8b8;box-shadow:inset 0 1px 1px #ddd"></div>
<div class="t" style="left:814px;top:153.5px;font-style:italic;color:#aaa"><span class="c">搜索</span></div>
<svg class="a" style="left:950px;top:152px" width="12" height="11"><circle cx="5" cy="5" r="2.8" fill="none" stroke="#555" stroke-width="1.1"/><path d="M7 7l3 3" stroke="#444" stroke-width="1.5"/></svg>
<!-- doc breadcrumb -->
<div class="a" style="left:809px;top:163.5px;width:156px;height:15px;background:linear-gradient(#f4f4f4,#dedede);border-bottom:1px solid #c8c8c8"></div>
<div class="t" style="left:814px;top:167.5px;color:#2e2e2e;font-size:7px;-webkit-text-stroke:0.12px #2e2e2e"><span class="c">文档材质</span>: <span class="c">全部</span></div>
<svg class="a" style="left:858px;top:163px" width="10" height="16"><path d="M2 0.5l5 7.5-5 7.5" fill="none" stroke="#aaa" stroke-width="0.8"/></svg>
<svg class="a" style="left:934px;top:164px" width="31" height="14"><rect x="2.5" y="2.5" width="8" height="8" fill="none" stroke="#666" stroke-width="1"/><path d="M15 3.5h1.2M15 6.5h1.2M15 9.5h1.2M17.5 3.5h5M17.5 6.5h5M17.5 9.5h5" stroke="#555" stroke-width="1.1"/><path d="M25 6h3l-1.5 1.8z" fill="#444"/></svg>
<!-- doc table -->
<div class="a" style="left:809px;top:179px;width:156px;height:12px;background:#fff"></div>
<div class="a" style="left:809px;top:191px;width:156px;height:13px;background:#e8e8e8"></div>
<div class="a" style="left:809px;top:204px;width:156px;height:13px;background:#fff"></div>
<div class="a" style="left:822px;top:179px;width:1px;height:38px;background:#e2e2e2"></div>
<div class="a" style="left:849px;top:179px;width:1px;height:38px;background:#e2e2e2"></div>
<div class="a" style="left:877px;top:179px;width:1px;height:38px;background:#e2e2e2"></div>
<div class="t" style="left:825px;top:181.5px;color:#2e2e2e;-webkit-text-stroke:0.12px #2e2e2e"><span class="c">名称</span></div>
<div class="a" style="left:843px;top:182px;width:0;height:0;border-left:1.5px solid transparent;border-right:1.5px solid transparent;border-bottom:2px solid #333"></div>
<div class="t" style="left:852px;top:181.5px;color:#2e2e2e;-webkit-text-stroke:0.12px #2e2e2e"><span class="c">类型</span></div>
<div class="t" style="left:880px;top:181.5px;color:#2e2e2e;-webkit-text-stroke:0.12px #2e2e2e"><span class="c">类别</span></div>
<div class="a" style="left:812px;top:193px;width:9px;height:9px;background:radial-gradient(circle at 75% 30%,#eee 0,#bbb 25%,#555 55%,#888 100%)"></div>
<div class="t" style="left:826px;top:193.5px;color:#2e2e2e;font-size:7.2px;-webkit-text-stroke:0.12px #2e2e2e">Global</div>
<div class="t" style="left:853px;top:193.5px;color:#2e2e2e;-webkit-text-stroke:0.12px #2e2e2e"><span class="c">常规</span></div>
<div class="t" style="left:880px;top:193.5px;color:#2e2e2e;-webkit-text-stroke:0.12px #2e2e2e"><span class="c">默认</span></div>
<div class="a" style="left:812px;top:206px;width:9px;height:9px;background:#9c5a38;box-shadow:inset 0 0 1px #5a3020"></div>
<div class="t" style="left:826px;top:206.5px;color:#2e2e2e;font-size:7.2px;-webkit-text-stroke:0.12px #2e2e2e"><span class="c">白</span>...1</div>
<div class="t" style="left:853px;top:206.5px;color:#2e2e2e;-webkit-text-stroke:0.12px #2e2e2e"><span class="c">木材</span></div>
<div class="t" style="left:880px;top:206.5px;color:#2e2e2e;-webkit-text-stroke:0.12px #2e2e2e"><span class="c">木材</span></div>
<div class="a" style="left:809px;top:217px;width:156px;height:3px;background:#d4d4d4"></div>
<!-- library bar -->
<div class="a" style="left:809px;top:220px;width:156px;height:13px;background:linear-gradient(#f6f6f6,#dcdcdc);border-bottom:1px solid #c0c0c0"></div>
<svg class="a" style="left:809px;top:220px" width="156" height="13">
<path d="M5.5 6.5l4-4 4 4M6.8 5.5v5h2v-2.5h1.4v2.5h2v-5" fill="#5a6470" stroke="#5a6470" stroke-width="0.8"/>
<path d="M18.5 5.5h3.4l-1.7 2z" fill="#444"/>
<path d="M23 0.5l4 6-4 6" fill="none" stroke="#aaa" stroke-width="0.8"/>
<path d="M75.5 5.5h3.4l-1.7 2z" fill="#444"/>
<path d="M80.5 0.5l4 6-4 6" fill="none" stroke="#aaa" stroke-width="0.8"/>
<rect x="127.5" y="2.5" width="8" height="8" fill="none" stroke="#666" stroke-width="1"/><path d="M140 3.5h1.2M140 6.5h1.2M140 9.5h1.2M142.5 3.5h5M142.5 6.5h5M142.5 9.5h5" stroke="#555" stroke-width="1.1"/><path d="M150 6h3l-1.5 1.8z" fill="#444"/>
</svg>
<div class="t" style="left:842px;top:222.5px;color:#2e2e2e;font-size:7.2px;-webkit-text-stroke:0.12px #2e2e2e">Autodesk <span class="c">库</span></div>
<!-- tree -->
<div class="a" style="left:809px;top:233px;width:80px;height:10px;background:#b3cdec;border-bottom:1px solid #9ab8dc"></div>
<svg class="a" style="left:810px;top:235px" width="5" height="6"><path d="M1 0.5l3 2.5-3 2.5z" fill="#222"/></svg>
<div class="t" style="left:816px;top:234px;color:#1a1a1a;font-size:7px;-webkit-text-stroke:0.2px #1a1a1a"><span class="c">主视图</span></div>
<div class="a" style="left:889px;top:233px;width:1px;height:217px;background:#cfcfcf"></div>
<!-- list -->
<div class="a" style="left:890px;top:233px;width:72px;height:217px;background:#fff;overflow:hidden">
<div class="a" style="left:13px;top:0;width:1px;height:217px;background:#e0e0e0"></div>
<div class="a" style="left:41px;top:0;width:1px;height:217px;background:#e0e0e0"></div>
</div>
<div class="a" style="left:890px;top:241.50px;width:72px;height:13.10px;background:#fff"></div>
<div class="a" style="left:894px;top:243.80px;width:8.5px;height:8.5px;background:#a07a48"></div>
<div class="t" style="left:907px;top:244.00px;color:#2e2e2e;-webkit-text-stroke:0.12px #2e2e2e"><span class="c">白</span>...<span class="c">双</span></div>
<div class="t" style="left:935px;top:244.00px;color:#2e2e2e;-webkit-text-stroke:0.12px #2e2e2e"><span class="c">木材</span></div>
<div class="a" style="left:890px;top:254.60px;width:72px;height:13.10px;background:#ebebeb"></div>
<div class="a" style="left:894px;top:256.90px;width:8.5px;height:8.5px;background:#8a5c3a"></div>
<div class="t" style="left:907px;top:257.10px;color:#2e2e2e;-webkit-text-stroke:0.12px #2e2e2e"><span class="c">白</span>...<span class="c">色</span></div>
<div class="t" style="left:935px;top:257.10px;color:#2e2e2e;-webkit-text-stroke:0.12px #2e2e2e"><span class="c">木材</span></div>
<div class="a" style="left:890px;top:267.70px;width:72px;height:13.10px;background:#fff"></div>
<div class="a" style="left:894px;top:270.00px;width:8.5px;height:8.5px;background:#5c3e2c"></div>
<div class="t" style="left:907px;top:270.20px;color:#2e2e2e;-webkit-text-stroke:0.12px #2e2e2e"><span class="c">白</span>...<span class="c">色</span></div>
<div class="t" style="left:935px;top:270.20px;color:#2e2e2e;-webkit-text-stroke:0.12px #2e2e2e"><span class="c">木材</span></div>
<div class="a" style="left:890px;top:280.80px;width:72px;height:13.10px;background:#ebebeb"></div>
<div class="a" style="left:894px;top:283.10px;width:8.5px;height:8.5px;background:#4a2820"></div>
<div class="t" style="left:907px;top:283.30px;color:#2e2e2e;-webkit-text-stroke:0.12px #2e2e2e"><span class="c">白</span>...<span class="c">色</span></div>
<div class="t" style="left:935px;top:283.30px;color:#2e2e2e;-webkit-text-stroke:0.12px #2e2e2e"><span class="c">木材</span></div>
<div class="a" style="left:890px;top:293.90px;width:72px;height:13.10px;background:#fff"></div>
<div class="a" style="left:894px;top:296.20px;width:8.5px;height:8.5px;background:#7a5638"></div>
<div class="t" style="left:907px;top:296.40px;color:#2e2e2e;-webkit-text-stroke:0.12px #2e2e2e"><span class="c">白</span>...<span class="c">哇</span></div>
<div class="t" style="left:935px;top:296.40px;color:#2e2e2e;-webkit-text-stroke:0.12px #2e2e2e"><span class="c">木材</span></div>
<div class="a" style="left:890px;top:307.00px;width:72px;height:13.10px;background:#ebebeb"></div>
<div class="a" style="left:894px;top:309.30px;width:8.5px;height:8.5px;background:linear-gradient(135deg,#777,#eee 50%,#999)"></div>
<div class="t" style="left:907px;top:309.50px;color:#2e2e2e;-webkit-text-stroke:0.12px #2e2e2e"><span class="c">白色</span></div>
<div class="t" style="left:935px;top:309.50px;color:#2e2e2e;-webkit-text-stroke:0.12px #2e2e2e"><span class="c">陶瓷</span></div>
<div class="a" style="left:890px;top:320.10px;width:72px;height:13.10px;background:#fff"></div>
<div class="a" style="left:894px;top:322.40px;width:8.5px;height:8.5px;background:linear-gradient(90deg,#bbb,#e4e4e4 50%,#c4c4c4)"></div>
<div class="t" style="left:907px;top:322.60px;color:#2e2e2e;-webkit-text-stroke:0.12px #2e2e2e"><span class="c">白色</span></div>
<div class="t" style="left:935px;top:322.60px;color:#2e2e2e;-webkit-text-stroke:0.12px #2e2e2e"><span class="c">常规</span></div>
<div class="a" style="left:890px;top:333.20px;width:72px;height:13.10px;background:#ebebeb"></div>
<div class="a" style="left:894px;top:335.50px;width:8.5px;height:8.5px;background:linear-gradient(90deg,#bbb,#ddd 50%,#c0c0c0)"></div>
<div class="t" style="left:907px;top:335.70px;color:#2e2e2e;-webkit-text-stroke:0.12px #2e2e2e"><span class="c">白色</span></div>
<div class="t" style="left:935px;top:335.70px;color:#2e2e2e;-webkit-text-stroke:0.12px #2e2e2e"><span class="c">混凝土</span></div>
<div class="a" style="left:890px;top:346.30px;width:72px;height:13.10px;background:#fff"></div>
<div class="a" style="left:894px;top:348.60px;width:8.5px;height:8.5px;background:linear-gradient(90deg,#bbb,#e0e0e0 50%,#c4c4c4)"></div>
<div class="t" style="left:907px;top:348.80px;color:#2e2e2e;-webkit-text-stroke:0.12px #2e2e2e"><span class="c">白色</span></div>
<div class="t" style="left:935px;top:348.80px;color:#2e2e2e;-webkit-text-stroke:0.12px #2e2e2e"><span class="c">墙漆</span></div>
<div class="a" style="left:890px;top:359.40px;width:72px;height:13.10px;background:#ebebeb"></div>
<div class="a" style="left:894px;top:361.70px;width:8.5px;height:8.5px;background:linear-gradient(90deg,#bbb,#ddd 50%,#c4c4c4)"></div>
<div class="t" style="left:907px;top:361.90px;color:#2e2e2e;-webkit-text-stroke:0.12px #2e2e2e"><span class="c">白色</span></div>
<div class="t" style="left:935px;top:361.90px;color:#2e2e2e;-webkit-text-stroke:0.12px #2e2e2e"><span class="c">墙漆</span></div>
<div class="a" style="left:890px;top:372.50px;width:72px;height:13.10px;background:#fff"></div>
<div class="a" style="left:894px;top:374.80px;width:8.5px;height:8.5px;background:linear-gradient(90deg,#bbb,#e0e0e0 50%,#c4c4c4)"></div>
<div class="t" style="left:907px;top:375.00px;color:#2e2e2e;-webkit-text-stroke:0.12px #2e2e2e"><span class="c">白</span>...<span class="c">片</span></div>
<div class="t" style="left:935px;top:375.00px;color:#2e2e2e;-webkit-text-stroke:0.12px #2e2e2e"><span class="c">常规</span></div>
<div class="a" style="left:890px;top:385.60px;width:72px;height:13.10px;background:#ebebeb"></div>
<div class="a" style="left:894px;top:387.90px;width:8.5px;height:8.5px;background:linear-gradient(90deg,#bbb,#ddd 50%,#c4c4c4)"></div>
<div class="t" style="left:907px;top:388.10px;color:#2e2e2e;-webkit-text-stroke:0.12px #2e2e2e"><span class="c">白</span>...<span class="c">花</span></div>
<div class="t" style="left:935px;top:388.10px;color:#2e2e2e;-webkit-text-stroke:0.12px #2e2e2e"><span class="c">常规</span></div>
<div class="a" style="left:890px;top:398.70px;width:72px;height:13.10px;background:#fff"></div>
<div class="a" style="left:894px;top:401.00px;width:8.5px;height:8.5px;background:#a2603a"></div>
<div class="t" style="left:907px;top:401.20px;color:#2e2e2e;-webkit-text-stroke:0.12px #2e2e2e"><span class="c">白</span>...<span class="c">光</span></div>
<div class="t" style="left:935px;top:401.20px;color:#2e2e2e;-webkit-text-stroke:0.12px #2e2e2e"><span class="c">木材</span></div>
<div class="a" style="left:890px;top:411.80px;width:72px;height:13.10px;background:#ebebeb"></div>
<div class="a" style="left:894px;top:414.10px;width:8.5px;height:8.5px;background:#a86638"></div>
<div class="t" style="left:907px;top:414.30px;color:#2e2e2e;-webkit-text-stroke:0.12px #2e2e2e"><span class="c">白</span>...1</div>
<div class="t" style="left:935px;top:414.30px;color:#2e2e2e;-webkit-text-stroke:0.12px #2e2e2e"><span class="c">木材</span></div>
<div class="a" style="left:890px;top:424.90px;width:72px;height:13.10px;background:#fff"></div>
<div class="a" style="left:894px;top:427.20px;width:8.5px;height:8.5px;background:#8c5a40"></div>
<div class="t" style="left:907px;top:427.40px;color:#2e2e2e;-webkit-text-stroke:0.12px #2e2e2e"><span class="c">白</span>...<span class="c">光</span></div>
<div class="t" style="left:935px;top:427.40px;color:#2e2e2e;-webkit-text-stroke:0.12px #2e2e2e"><span class="c">木材</span></div>
<div class="a" style="left:890px;top:438.00px;width:72px;height:12.00px;background:#ebebeb"></div>
<div class="a" style="left:894px;top:440.30px;width:8.5px;height:8.5px;background:#9a5c38"></div>
<div class="t" style="left:907px;top:440.50px;color:#2e2e2e;-webkit-text-stroke:0.12px #2e2e2e"><span class="c">白</span>...<span class="c">泽</span></div>
<div class="t" style="left:935px;top:440.50px;color:#2e2e2e;-webkit-text-stroke:0.12px #2e2e2e"><span class="c">木材</span></div>
<div class="a" style="left:890px;top:233px;width:72px;height:13px;background:#fff"></div>
<div class="a" style="left:903px;top:233px;width:1px;height:217px;background:#e4e4e4"></div>
<div class="a" style="left:931px;top:233px;width:1px;height:217px;background:#e4e4e4"></div>
<div class="t" style="left:906px;top:236px;color:#2e2e2e;-webkit-text-stroke:0.12px #2e2e2e"><span class="c">名称</span></div>
<div class="t" style="left:934px;top:236px;color:#2e2e2e;-webkit-text-stroke:0.12px #2e2e2e"><span class="c">类型</span></div>
<div class="a" style="left:922px;top:237px;width:0;height:0;border-left:1.5px solid transparent;border-right:1.5px solid transparent;border-bottom:2px solid #333"></div>
<div class="a" style="left:962px;top:233px;width:3px;height:217px;background:#f0f0f0"></div>
<div class="a" style="left:962px;top:249px;width:3px;height:14px;background:#c8c8c8"></div>
<!-- footer -->
<div class="a" style="left:809px;top:450px;width:156px;height:11px;background:#e8e8e8;border-top:1px solid #ccc"></div>
<svg class="a" style="left:809px;top:450px" width="156" height="11">
<path d="M3 3h3l1 1h4v6H3z" fill="#e8a030"/><path d="M3 5h8v5H3z" fill="#f4c060"/><rect x="8" y="6" width="3" height="4" fill="#9ab"/>
<path d="M12.5 5.5h2.4l-1.2 1.4z" fill="#444"/>
<circle cx="22" cy="5.5" r="3.6" fill="#8a8a8a"/><circle cx="21.5" cy="5" r="2.4" fill="#c0c0c0"/><path d="M22.5 8.5h3M24 7v3" stroke="#2a6ae8" stroke-width="1"/>
<path d="M29.5 5.5h2.4l-1.2 1.4z" fill="#444"/>
<rect x="146" y="2" width="6" height="8" fill="none" stroke="#666" stroke-width="0.8"/><path d="M146 5h6M149 5v5" stroke="#666" stroke-width="0.6"/>
</svg>
</body></html>
